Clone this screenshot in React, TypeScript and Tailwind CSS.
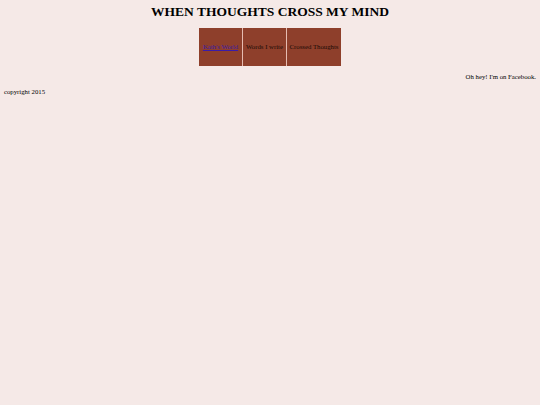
export default function App() {
  return (
    <div className="min-h-[405px] w-full bg-[#f5e9e7] px-[4px] pt-[4px] text-[6.75px] leading-[8px] text-black" style={{ fontFamily: '"Liberation Serif", "Times New Roman", serif' }}>
      <h1 className="text-center text-[13.5px] font-bold leading-[15px]">WHEN THOUGHTS CROSS MY MIND</h1>
      <div className="mt-[9px] flex justify-center">
        <div className="flex gap-[1px] bg-[#e6bcb1]">
          <div className="flex h-[38px] w-[43px] items-center justify-center whitespace-nowrap bg-[#8e3f2b]">
            <a href="#" className="text-[#3a1ca8] underline">Kath's World</a>
          </div>
          <div className="flex h-[38px] w-[43px] items-center justify-center whitespace-nowrap bg-[#8e3f2b] text-[#1a0a06]">Words I write</div>
          <div className="flex h-[38px] w-[54px] items-center justify-center whitespace-nowrap bg-[#8e3f2b] text-[#1a0a06]">Crossed Thoughts</div>
        </div>
      </div>
      <p className="mt-[7px] text-right text-black">Oh hey! I'm on Facebook.</p>
      <p className="mt-[7px] text-black">copyright 2015</p>
    </div>
  );
}
